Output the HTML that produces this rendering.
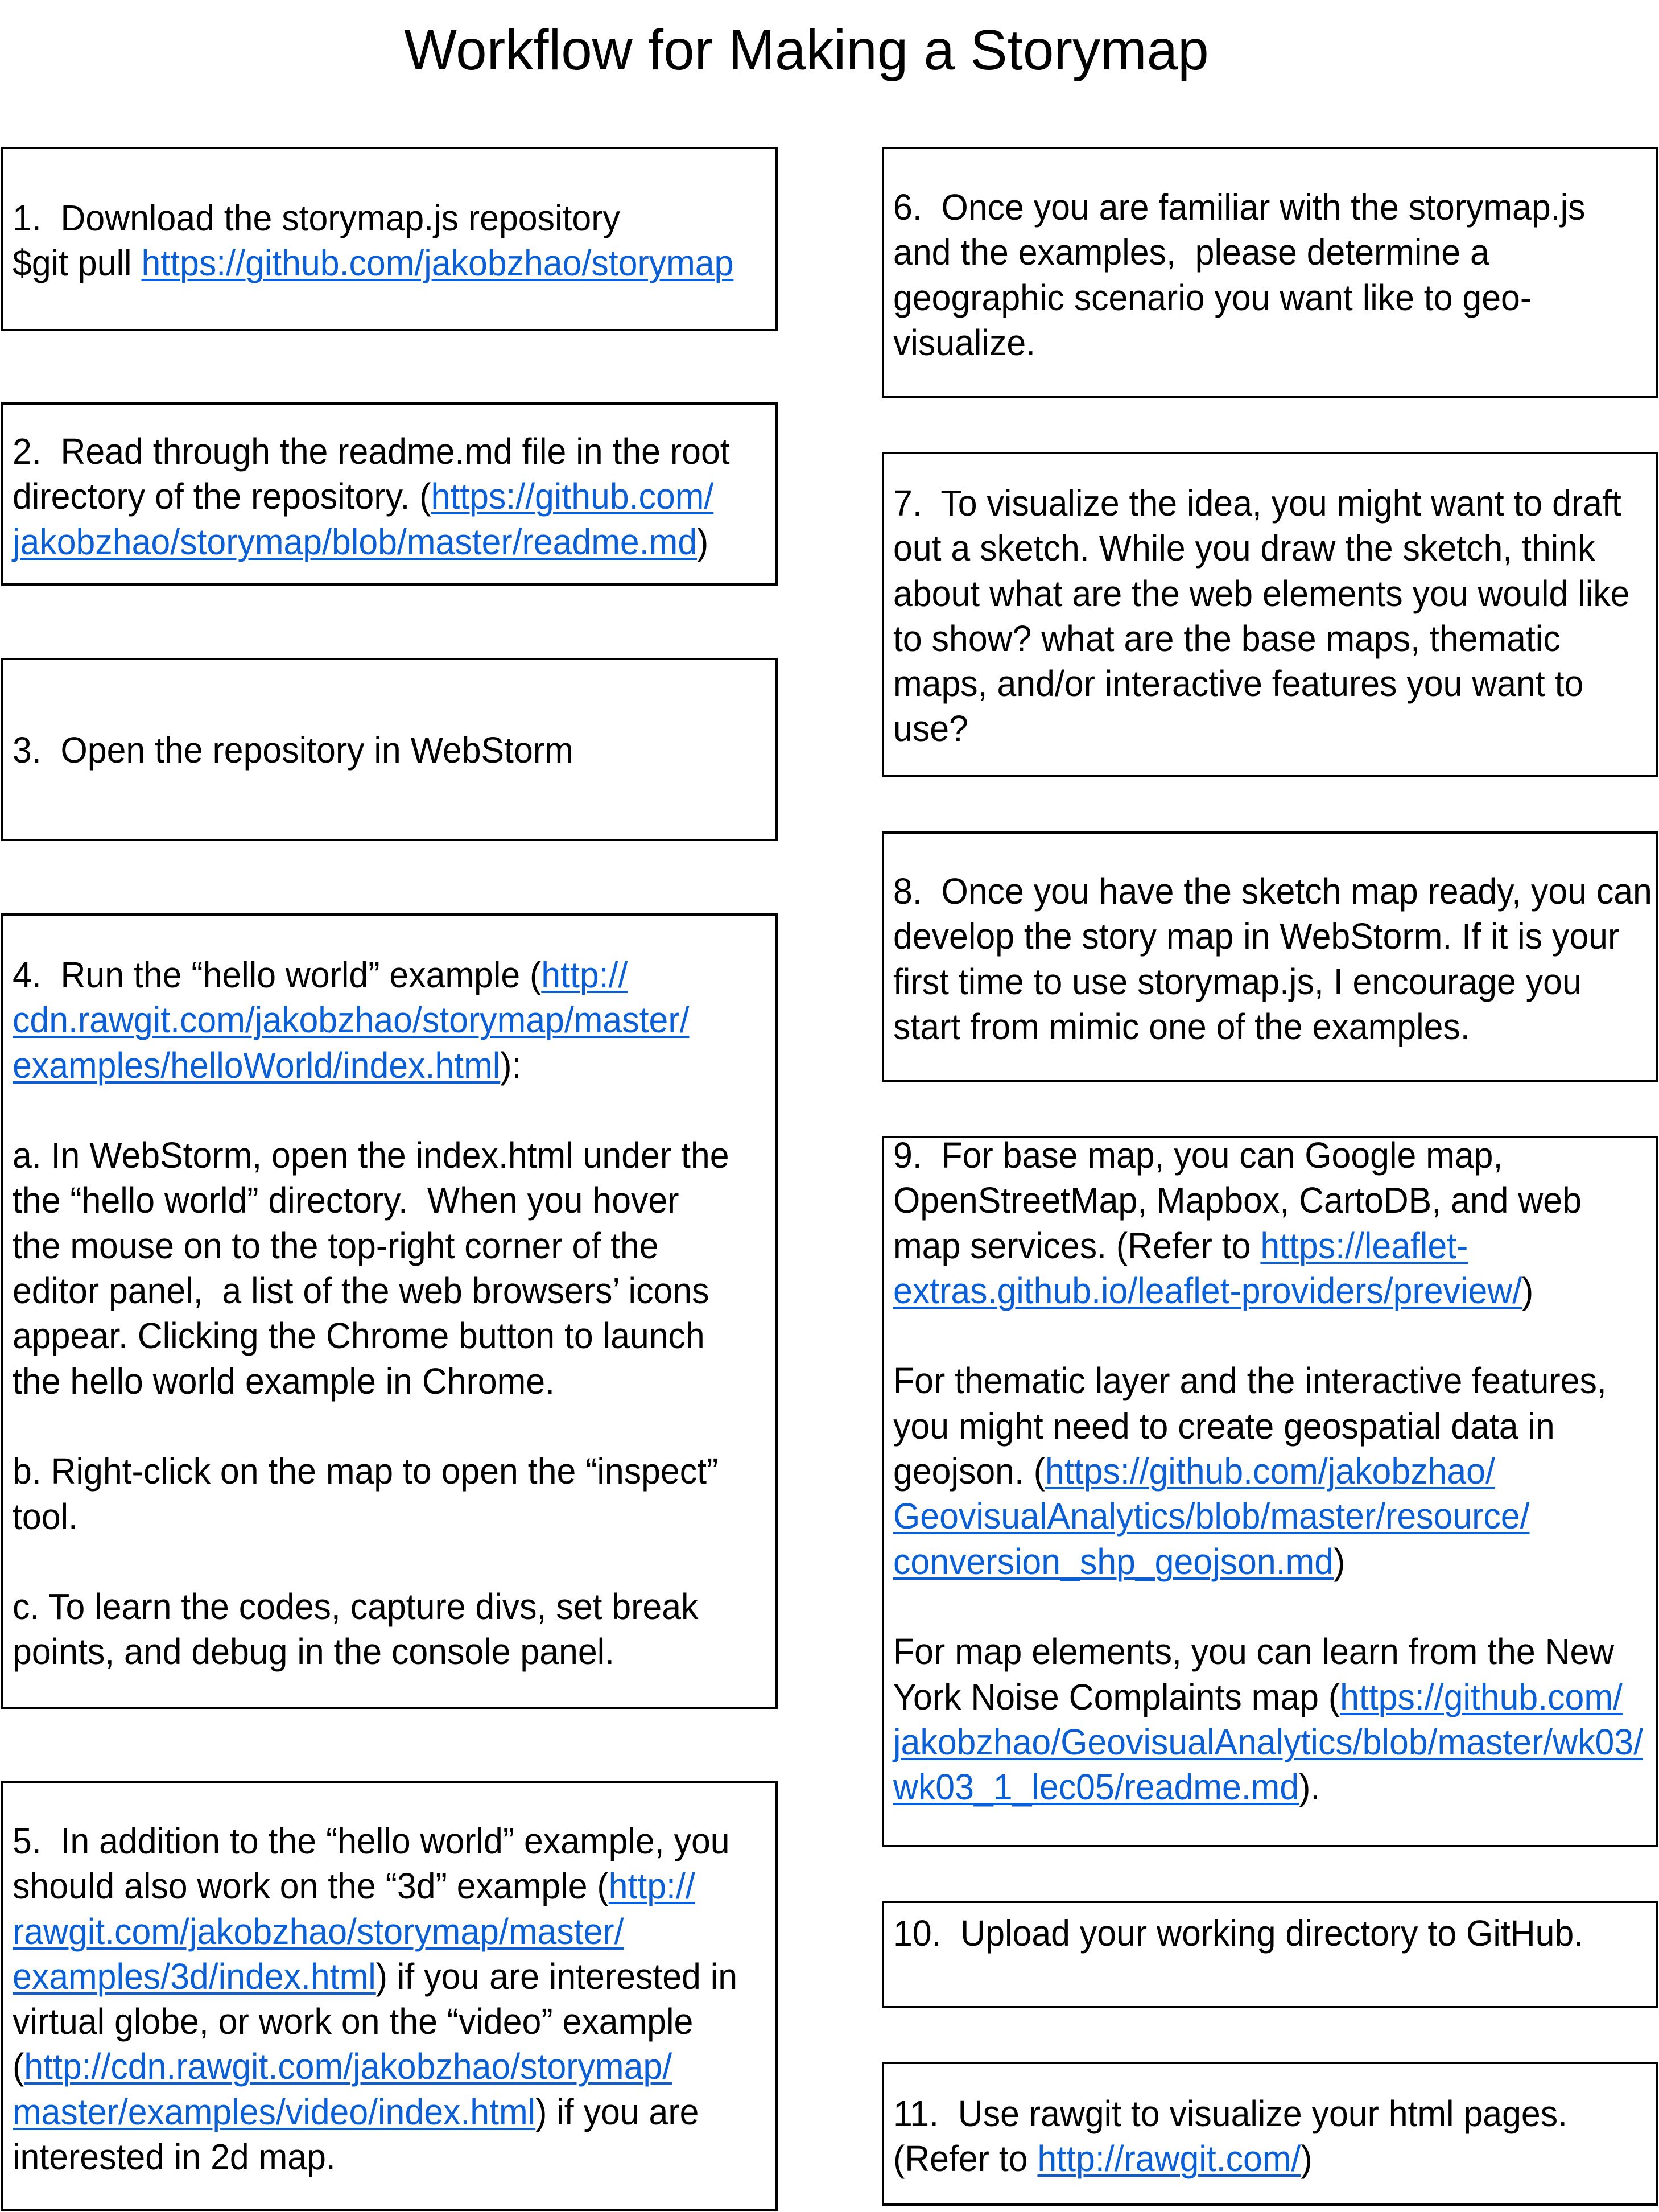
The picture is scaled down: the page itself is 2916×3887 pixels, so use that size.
<!DOCTYPE html>
<html><head><meta charset="utf-8"><style>
html,body{margin:0;padding:0;background:#fff;}
body{width:2916px;height:3887px;position:relative;overflow:hidden;font-family:"Liberation Sans",sans-serif;color:#000;}
.b{position:absolute;border:4px solid #000;box-sizing:border-box;}
.t{position:absolute;white-space:nowrap;font-size:64px;line-height:79.3px;transform:scaleX(0.95);transform-origin:0 0;}
.l{color:#0a5fd6;text-decoration:underline;text-decoration-thickness:4px;text-underline-offset:6px;}
h1{position:absolute;margin:0;top:28px;left:-40px;width:2916px;text-align:center;font-weight:normal;font-size:100px;line-height:120px;}
h1 span{display:inline-block;transform:scaleX(0.98);}
</style></head><body>
<h1><span>Workflow for Making a Storymap</span></h1>

<div class="b" style="left:1px;top:258px;width:1366px;height:324px"></div>
<div class="t" style="left:22px;top:344px">1.&nbsp; Download the storymap.js repository<br>$git pull <span class="l">https://github.com/jakobzhao/storymap</span></div>

<div class="b" style="left:1px;top:707px;width:1366px;height:322px"></div>
<div class="t" style="left:22px;top:754px">2.&nbsp; Read through the readme.md file in the root<br>directory of the repository. (<span class="l">https://github.com/</span><br><span class="l">jakobzhao/storymap/blob/master/readme.md</span>)</div>

<div class="b" style="left:1px;top:1156px;width:1366px;height:322px"></div>
<div class="t" style="left:22px;top:1279px">3.&nbsp; Open the repository in WebStorm</div>

<div class="b" style="left:1px;top:1605px;width:1366px;height:1398px"></div>
<div class="t" style="left:22px;top:1674px">4.&nbsp; Run the “hello world” example (<span class="l">http://</span><br><span class="l">cdn.rawgit.com/jakobzhao/storymap/master/</span><br><span class="l">examples/helloWorld/index.html</span>):<br><br>a. In WebStorm, open the index.html under the<br>the “hello world” directory.&nbsp; When you hover<br>the mouse on to the top-right corner of the<br>editor panel,&nbsp; a list of the web browsers’ icons<br>appear. Clicking the Chrome button to launch<br>the hello world example in Chrome.<br><br>b. Right-click on the map to open the “inspect”<br>tool.<br><br>c. To learn the codes, capture divs, set break<br>points, and debug in the console panel.</div>

<div class="b" style="left:1px;top:3130px;width:1366px;height:756px"></div>
<div class="t" style="left:22px;top:3196px">5.&nbsp; In addition to the “hello world” example, you<br>should also work on the “3d” example (<span class="l">http://</span><br><span class="l">rawgit.com/jakobzhao/storymap/master/</span><br><span class="l">examples/3d/index.html</span>) if you are interested in<br>virtual globe, or work on the “video” example<br>(<span class="l">http://cdn.rawgit.com/jakobzhao/storymap/</span><br><span class="l">master/examples/video/index.html</span>) if you are<br>interested in 2d map.</div>

<div class="b" style="left:1550px;top:258px;width:1365px;height:441px"></div>
<div class="t" style="left:1570px;top:325px">6.&nbsp; Once you are familiar with the storymap.js<br>and the examples,&nbsp; please determine a<br>geographic scenario you want like to geo-<br>visualize.</div>

<div class="b" style="left:1550px;top:794px;width:1365px;height:572px"></div>
<div class="t" style="left:1570px;top:845px">7.&nbsp; To visualize the idea, you might want to draft<br>out a sketch. While you draw the sketch, think<br>about what are the web elements you would like<br>to show? what are the base maps, thematic<br>maps, and/or interactive features you want to<br>use?</div>

<div class="b" style="left:1550px;top:1461px;width:1365px;height:441px"></div>
<div class="t" style="left:1570px;top:1527px">8.&nbsp; Once you have the sketch map ready, you can<br>develop the story map in WebStorm. If it is your<br>first time to use storymap.js, I encourage you<br>start from mimic one of the examples.</div>

<div class="b" style="left:1550px;top:1996px;width:1365px;height:1250px"></div>
<div class="t" style="left:1570px;top:1991px">9.&nbsp; For base map, you can Google map,<br>OpenStreetMap, Mapbox, CartoDB, and web<br>map services. (Refer to <span class="l">https://leaflet-</span><br><span class="l">extras.github.io/leaflet-providers/preview/</span>)<br><br>For thematic layer and the interactive features,<br>you might need to create geospatial data in<br>geojson. (<span class="l">https://github.com/jakobzhao/</span><br><span class="l">GeovisualAnalytics/blob/master/resource/</span><br><span class="l">conversion_shp_geojson.md</span>)<br><br>For map elements, you can learn from the New<br>York Noise Complaints map (<span class="l">https://github.com/</span><br><span class="l">jakobzhao/GeovisualAnalytics/blob/master/wk03/</span><br><span class="l">wk03_1_lec05/readme.md</span>).</div>

<div class="b" style="left:1550px;top:3340px;width:1365px;height:189px"></div>
<div class="t" style="left:1570px;top:3358px">10.&nbsp; Upload your working directory to GitHub.</div>

<div class="b" style="left:1550px;top:3623px;width:1365px;height:253px"></div>
<div class="t" style="left:1570px;top:3675px">11.&nbsp; Use rawgit to visualize your html pages.<br>(Refer to <span class="l">http://rawgit.com/</span>)</div>
</body></html>
